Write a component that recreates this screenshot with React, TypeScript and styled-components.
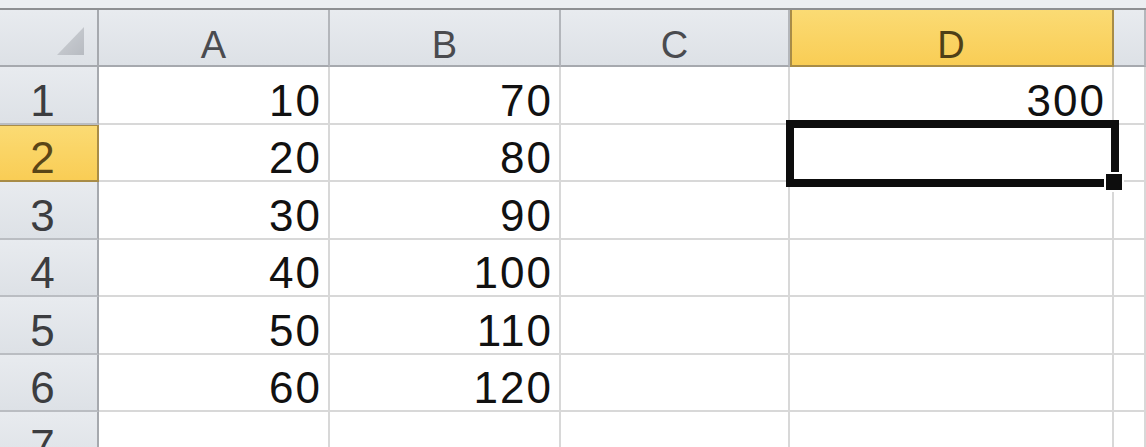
import React from "react";
import styled, { createGlobalStyle, css } from "styled-components";

const GlobalStyle = createGlobalStyle`
  html, body {
    margin: 0;
    padding: 0;
    background: #ffffff;
    overflow: hidden;
  }
  body {
    font-family: "Liberation Sans", Arial, sans-serif;
  }
  * { box-sizing: border-box; }
`;

const Frame = styled.div`
  width: 1146px;
  height: 447px;
  overflow: hidden;
  display: flex;
  flex-direction: column;
  background: #ffffff;
`;

const TopStrip = styled.div`
  flex: 0 0 10px;
  background: #eceef1;
  border-bottom: 2px solid #8e8f92;
`;

const Sheet = styled.div`
  display: grid;
  grid-template-columns: 99px 231px 231px 229px 324px 1fr;
  grid-template-rows: 57px repeat(7, 57.5px);
`;

const brown = "#a88c47";

const headerBase = css`
  background: linear-gradient(#e8ebef, #dde1e6);
  border-right: 2px solid #b3b6bb;
  border-bottom: 2px solid #a6a9ae;
  display: flex;
`;

const activeHeader = css`
  background: linear-gradient(#fbdb74, #f9cd55);
  border-right-color: ${brown};
  border-bottom-color: ${brown};
`;

const CornerCell = styled.div`
  ${headerBase};
  border-right-color: #a6a9ae;
  align-items: flex-end;
  justify-content: flex-end;
  padding: 0 13px 10px 0;
`;

const ColHeader = styled.div<{ $active?: boolean }>`
  ${headerBase};
  align-items: flex-end;
  justify-content: center;
  padding-bottom: 1px;
  font-size: 38px;
  line-height: 38px;
  color: #4a4b4f;
  ${(p) =>
    p.$active &&
    css`
      ${activeHeader};
      box-shadow: inset 2px 0 0 ${brown};
      color: #4e3f17;
    `}
`;

const RowHeader = styled.div<{ $active?: boolean }>`
  ${headerBase};
  border-right-color: #a6a9ae;
  border-bottom-color: #babdc2;
  align-items: flex-end;
  justify-content: center;
  padding-right: 10px;
  font-size: 44px;
  line-height: 44px;
  letter-spacing: 2px;
  color: #3c3d40;
  ${(p) =>
    p.$active &&
    css`
      ${activeHeader};
      box-shadow: inset 0 1px 0 ${brown};
      color: #5a4617;
    `}
`;

const Cell = styled.div<{ $selected?: boolean }>`
  position: relative;
  z-index: ${(p) => (p.$selected ? 2 : "auto")};
  background: #ffffff;
  border-right: 2px solid #d8d8d8;
  border-bottom: 2px solid #d8d8d8;
  display: flex;
  align-items: flex-end;
  justify-content: flex-end;
  padding-right: 6px;
  font-size: 44px;
  line-height: 44px;
  letter-spacing: 2px;
  color: #111111;
`;

const Selection = styled.div`
  position: absolute;
  left: -4px;
  right: -7px;
  top: -4.5px;
  bottom: -7px;
  border: 8px solid #0d0d0d;
  pointer-events: none;
`;

const FillHandle = styled.div`
  position: absolute;
  right: -13px;
  bottom: -13px;
  width: 20px;
  height: 20px;
  background: #0d0d0d;
  border: 2px solid #ffffff;
`;

const CornerMark = () => (
  <svg width="27" height="28" viewBox="0 0 27 28" aria-hidden="true">
    <defs>
      <linearGradient id="cm" x1="0" y1="0" x2="1" y2="1">
        <stop offset="0" stopColor="#cfd2d7" />
        <stop offset="1" stopColor="#b7bbc1" />
      </linearGradient>
    </defs>
    <polygon points="27,0 27,28 0,28" fill="url(#cm)" />
  </svg>
);

const columns = ["A", "B", "C", "D", ""];
const data: (string | number)[][] = [
  [10, 70, "", 300, ""],
  [20, 80, "", "", ""],
  [30, 90, "", "", ""],
  [40, 100, "", "", ""],
  [50, 110, "", "", ""],
  [60, 120, "", "", ""],
  ["", "", "", "", ""],
];

const activeCol = 3;
const activeRow = 1;

export default function App() {
  return (
    <>
      <GlobalStyle />
      <Frame>
        <TopStrip />
        <Sheet>
          <CornerCell>
            <CornerMark />
          </CornerCell>
          {columns.map((c, i) => (
            <ColHeader key={`h${i}`} $active={i === activeCol}>
              {c}
            </ColHeader>
          ))}
          {data.map((row, r) => (
            <React.Fragment key={`r${r}`}>
              <RowHeader $active={r === activeRow}>{r + 1}</RowHeader>
              {row.map((v, c) => {
                const selected = r === activeRow && c === activeCol;
                return (
                  <Cell key={`c${r}-${c}`} $selected={selected}>
                    {v}
                    {selected && (
                      <Selection>
                        <FillHandle />
                      </Selection>
                    )}
                  </Cell>
                );
              })}
            </React.Fragment>
          ))}
        </Sheet>
      </Frame>
    </>
  );
}
